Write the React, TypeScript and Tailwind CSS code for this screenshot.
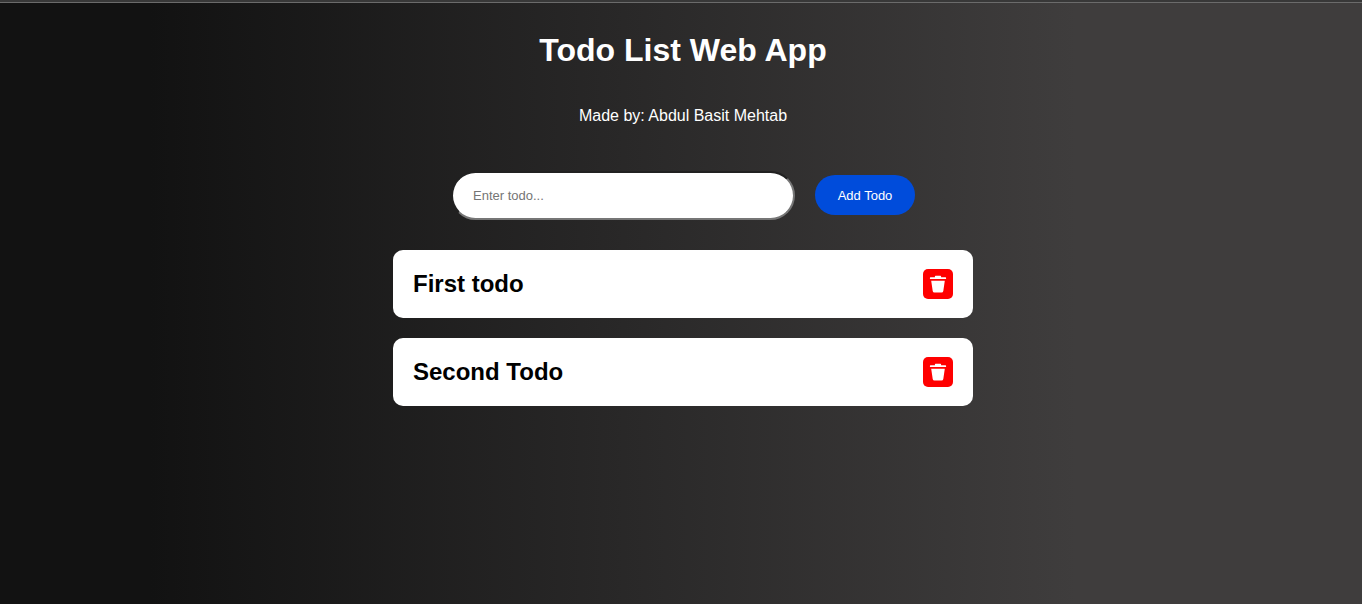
import { useState } from "react";

function TrashIcon() {
  return (
    <svg viewBox="0 0 20 20" className="size-5" fill="currentColor" aria-hidden="true">
      <path d="M7.6 1.7h4.8a.7.7 0 0 1 .7.7v.9H17.5a.6.6 0 0 1 .6.6v.6a.5.5 0 0 1-.5.5H2.4a.5.5 0 0 1-.5-.5v-.6a.6.6 0 0 1 .6-.6H6.9v-.9a.7.7 0 0 1 .7-.7z" />
      <path d="M3.2 6.7h13.6l-1.5 10.2a1.8 1.8 0 0 1-1.8 1.5H6.5a1.8 1.8 0 0 1-1.8-1.5z" />
    </svg>
  );
}

function TodoItem({ title, onDelete }: { title: string; onDelete: () => void }) {
  return (
    <li className="flex items-center justify-between rounded-[10px] bg-white p-5 text-black">
      <h2 className="text-2xl leading-7 font-bold">{title}</h2>
      <button
        type="button"
        aria-label={`Delete ${title}`}
        onClick={onDelete}
        className="-my-1 flex size-[30px] items-center justify-center rounded-[5px] bg-[#ff0000] text-white"
      >
        <TrashIcon />
      </button>
    </li>
  );
}

export default function App() {
  const [todos, setTodos] = useState(["First todo", "Second Todo"]);
  const [text, setText] = useState("");

  const addTodo = () => {
    const title = text.trim();
    if (!title) return;
    setTodos([...todos, title]);
    setText("");
  };

  return (
    <div className="min-h-screen border-t-2 border-[#383838] bg-[linear-gradient(to_right,#121212_11%,#3f3d3d_79%)] bg-origin-border font-['Liberation_Sans',Arial,sans-serif] text-white">
      <div className="border-t border-[#6b6b6b] pb-10 pl-1">
        <header className="pt-7 text-center">
          <h1 className="text-[32px] leading-[38px] font-bold">Todo List Web App</h1>
          <p className="mt-[38px] text-base leading-[18px]">Made by: Abdul Basit Mehtab</p>
        </header>
        <form
          className="mt-[46px] flex items-baseline justify-center gap-5 px-4"
          onSubmit={(e) => {
            e.preventDefault();
            addTodo();
          }}
        >
          <input
            type="text"
            aria-label="New todo"
            value={text}
            onChange={(e) => setText(e.target.value)}
            placeholder="Enter todo..."
            className="w-full max-w-[344px] rounded-[25px] border-2 border-[#767676] bg-white px-5 py-[15px] text-[13px] leading-[15px] text-black outline-none [border-style:inset] placeholder:text-[#757575]"
          />
          <button
            type="submit"
            className="w-[100px] shrink-0 rounded-[20px] bg-[#004cdb] pt-[13px] pb-3 text-[13px] leading-[15px] text-white"
          >
            Add Todo
          </button>
        </form>
        <ul className="mx-auto mt-[30px] flex max-w-[580px] flex-col gap-5">
          {todos.map((title, index) => (
            <TodoItem
              key={`${title}-${index}`}
              title={title}
              onDelete={() => setTodos(todos.filter((_, i) => i !== index))}
            />
          ))}
        </ul>
      </div>
    </div>
  );
}
